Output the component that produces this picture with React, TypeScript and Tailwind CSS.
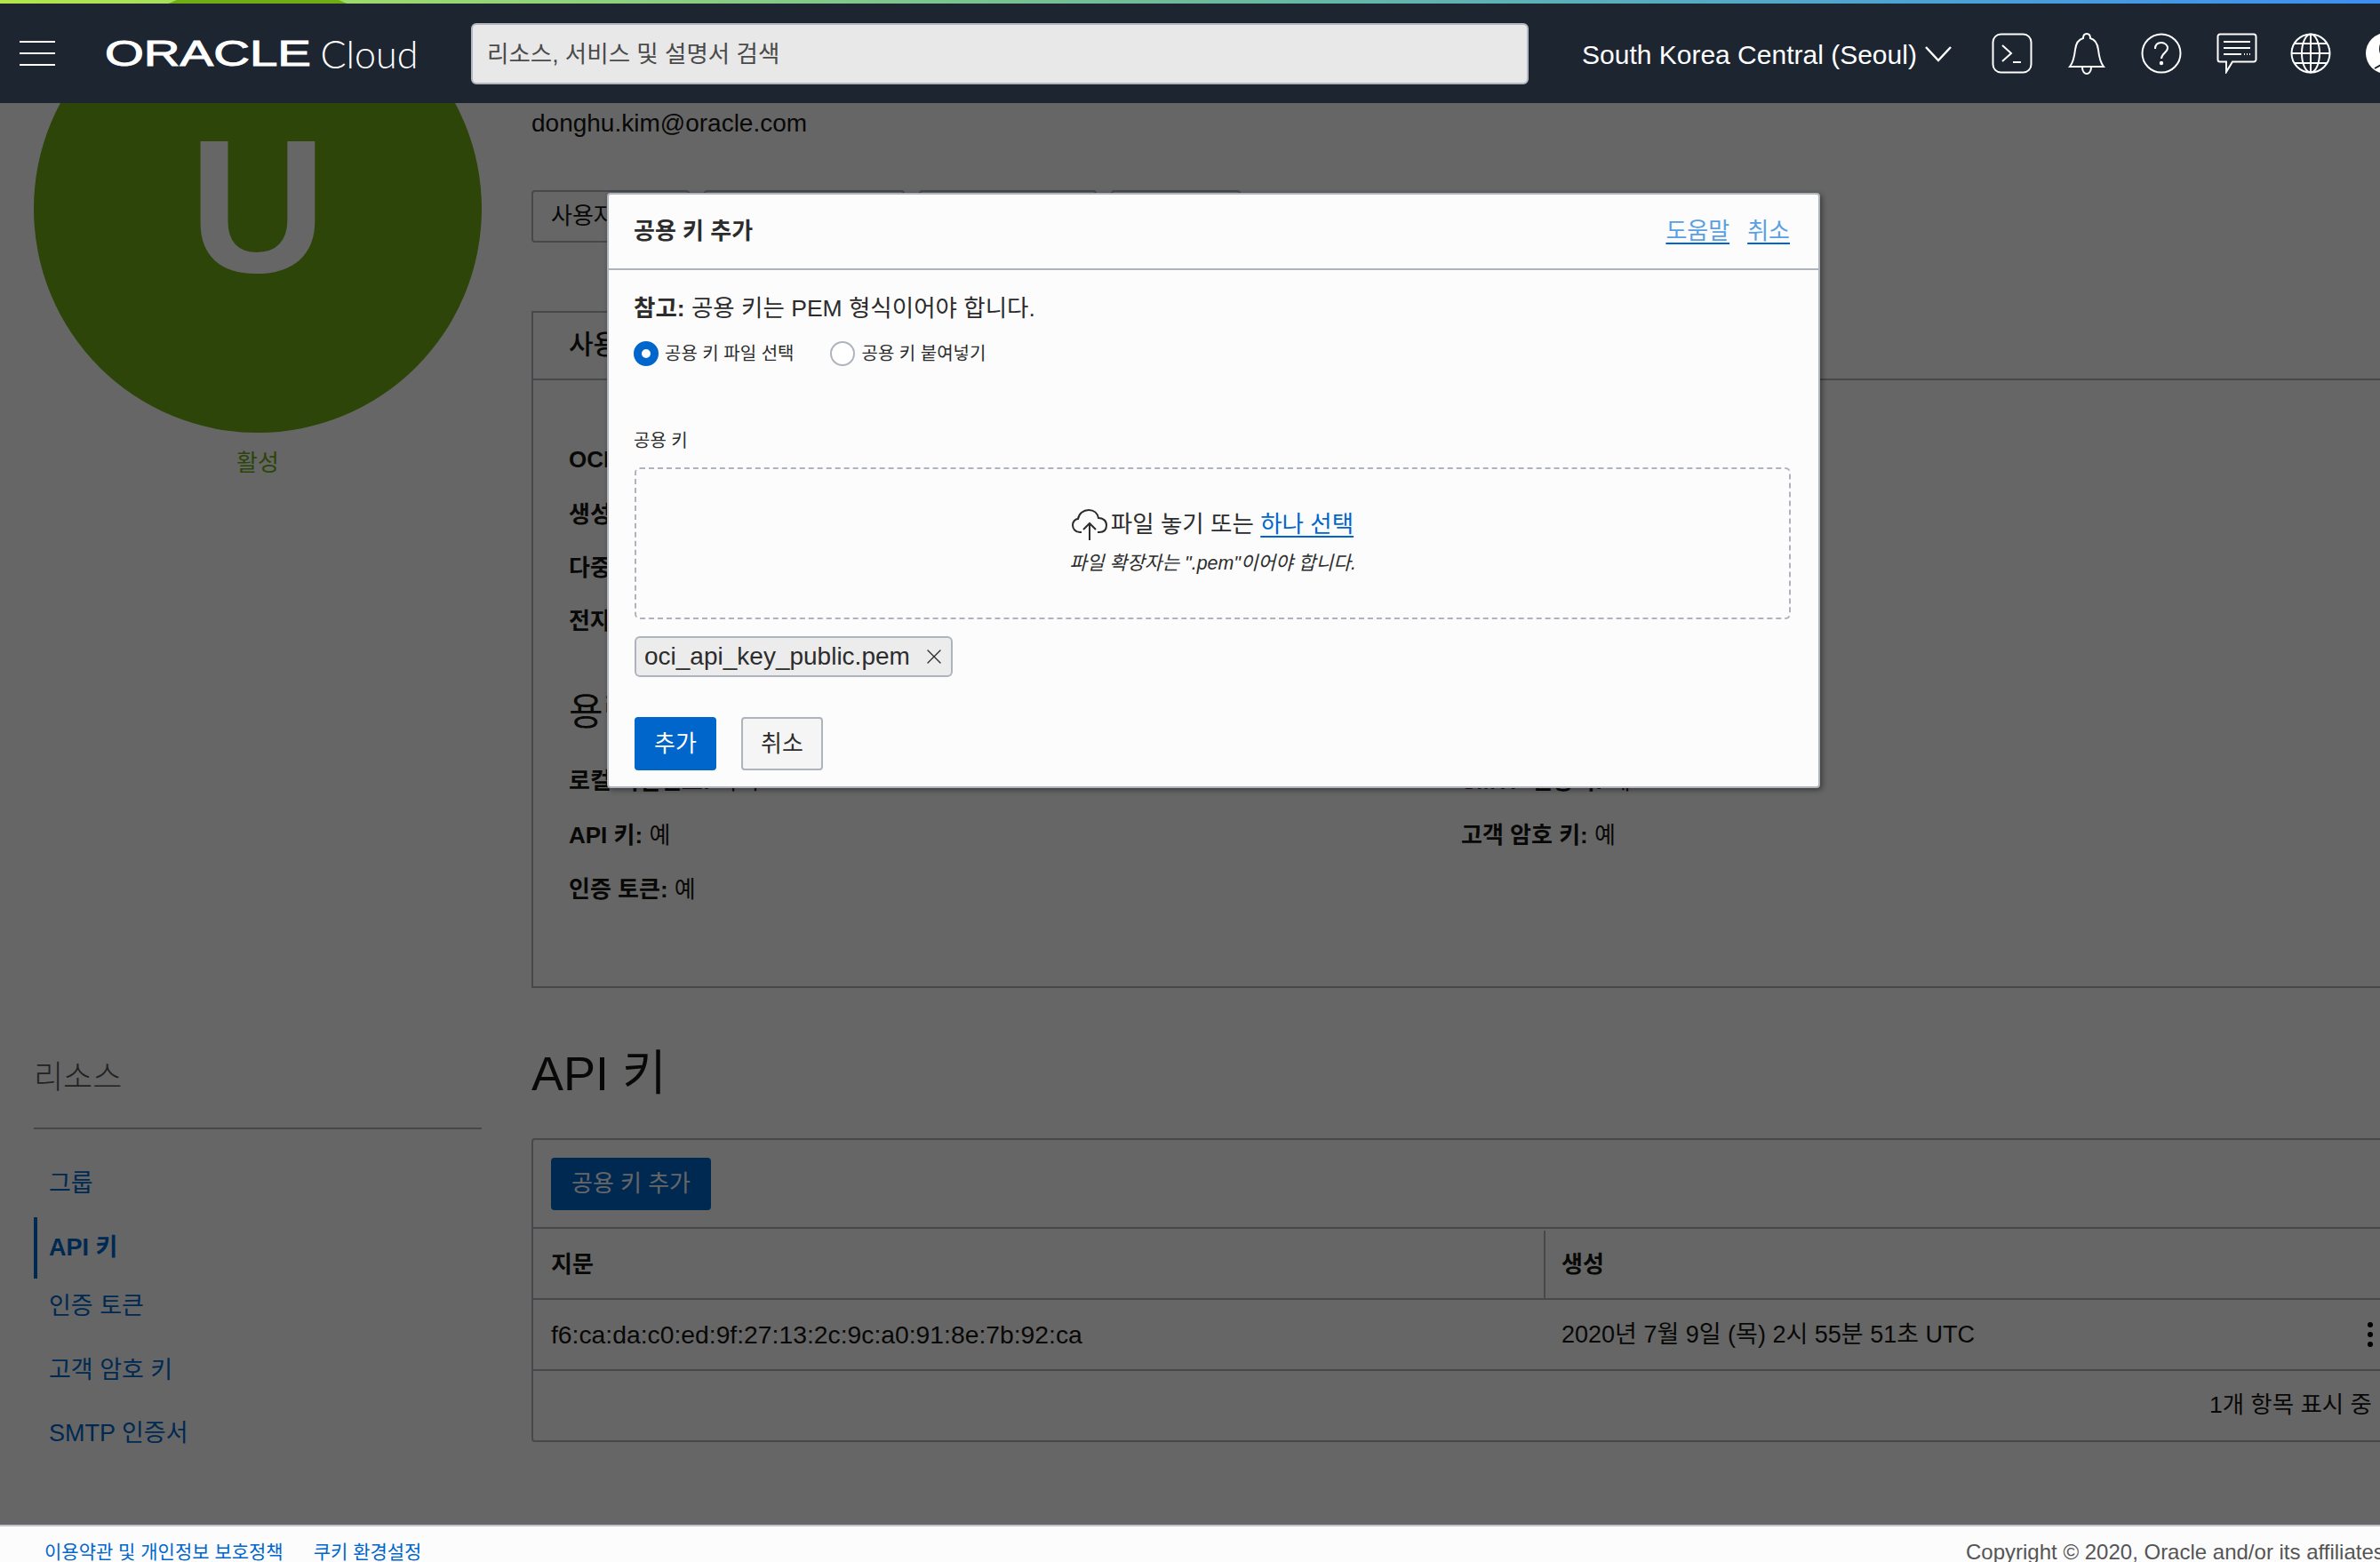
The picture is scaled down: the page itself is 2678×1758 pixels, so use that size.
import { X } from "lucide-react";

const FONT = "font-['Liberation_Sans','Noto_Sans_CJK_KR',sans-serif]";

function HeaderIcons() {
  return (
    <div className="ml-[45px] flex shrink-0 items-center gap-[39px] text-white">
      <svg className="h-[46px] w-[46px] shrink-0" viewBox="0 0 46 46" fill="none" stroke="currentColor" strokeWidth="2">
        <rect x="1.5" y="1.5" width="43" height="43" rx="9" />
        <path d="M12 14l10 9-10 9M24 33h9" />
      </svg>
      <svg className="h-[48px] w-[44px] shrink-0" viewBox="0 0 44 48" fill="none" stroke="currentColor" strokeWidth="2">
        <path d="M3 39c4-5 5-10 6-19 1-8 5-12 9-13 0-3 1-5 4-5s4 2 4 5c4 1 8 5 9 13 1 9 2 14 6 19z" />
        <path d="M17 40c0 5 3 7 5 7s5-2 5-7" />
      </svg>
      <svg className="h-[46px] w-[46px] shrink-0" viewBox="0 0 46 46" fill="none" stroke="currentColor" strokeWidth="2">
        <circle cx="23" cy="23" r="21.5" />
        <path d="M16 18c0-5 3-7 7-7s7 3 7 6c0 5-7 6-7 12" />
        <circle cx="23" cy="34" r="1.2" fill="currentColor" />
      </svg>
      <svg className="h-[46px] w-[46px] shrink-0" viewBox="0 0 46 46" fill="none" stroke="currentColor" strokeWidth="2">
        <path d="M4 1.5h38a2.500 2.500 0 0 1 2.500 2.500v26a2.500 2.500 0 0 1-2.500 2.500H18L11 44V32.500H4A2.500 2.500 0 0 1 1.500 30V4A2.500 2.500 0 0 1 4 1.500z" />
        <path d="M8 10h30M8 17h30M8 24h20M31 24h1M34 24h1M37 24h1" />
      </svg>
      <svg className="-ml-[2px] h-[48px] w-[46px] shrink-0" viewBox="0 0 46 48" fill="none" stroke="currentColor" strokeWidth="2">
        <circle cx="23" cy="24" r="21.500" />
        <ellipse cx="23" cy="24" rx="10" ry="21.500" />
        <path d="M23 2.500v43M5 13h36M1.500 24h43M5 35h36" />
      </svg>
      <svg className="h-[46px] w-[46px] shrink-0" viewBox="0 0 46 46">
        <circle cx="23" cy="23" r="23" fill="currentColor" />
        <ellipse cx="24" cy="18" rx="9" ry="12" fill="#1c2530" />
        <path d="M10 40l14-8 14 8" fill="none" stroke="#1c2530" strokeWidth="2" />
      </svg>
    </div>
  );
}

function Header() {
  return (
    <header className="relative z-20 flex h-[112px] shrink-0 items-center bg-[#1c2530]">
      <div className="ml-[22px] flex w-[40px] shrink-0 flex-col gap-[11px]">
        <div className="h-[2px] bg-white" />
        <div className="h-[2px] bg-white" />
        <div className="h-[2px] bg-white" />
      </div>
      <div className="ml-[56px] flex w-[352px] shrink-0 items-center whitespace-nowrap text-white">
        <span className="origin-left scale-x-[1.41] text-[40px] leading-none [-webkit-text-stroke:1px_white]">ORACLE</span>
        <span className="ml-[78px] font-['Lato',sans-serif] text-[43px] leading-none font-light">Cloud</span>
      </div>
      <div className="ml-[60px] flex h-[69px] w-[1190px] shrink-0 items-center rounded-[6px] border-2 border-[#b3b7c0] bg-[#e8e8e8] pt-[4px] pl-[16px] text-[26.500px] text-[#4a4a4a]">
        리소스, 서비스 및 설명서 검색
      </div>
      <div className="ml-[60px] flex shrink-0 items-center pt-[2px] whitespace-nowrap text-[30px] text-white">
        South Korea Central (Seoul)
        <svg className="ml-[9px] h-[18px] w-[30px]" viewBox="0 0 30 18" fill="none" stroke="currentColor" strokeWidth="2.500">
          <path d="M1 1l14 15L29 1" />
        </svg>
      </div>
      <HeaderIcons />
    </header>
  );
}

function Sidebar() {
  return (
    <aside className="ml-[38px] w-[504px] shrink-0">
      <div className="-mt-[133px] flex h-[504px] w-[504px] items-center justify-center rounded-full bg-[#70ad14] pb-[6px] text-[214px] leading-none font-bold text-white">
        U
      </div>
      <div className="mt-[19px] text-center text-[26px] leading-[30px] text-[#70ad14]">활성</div>
      <div className="mt-[656px] border-b-2 border-[#aeb3bd] pb-[35px] text-[36px] leading-[42px] font-light text-[#555]">
        리소스
      </div>
      <nav className="mt-[39px] text-[27px] text-[#0066cc]">
        <div className="flex h-[44px] items-center pl-[17px]">그룹</div>
        <div className="mt-[16px] flex h-[69px] items-center border-l-4 border-[#0066cc] pl-[13px] font-bold">API 키</div>
        <div className="mt-[1px] flex h-[60px] items-center pl-[17px]">인증 토큰</div>
        <div className="mt-[12px] flex h-[60px] items-center pl-[17px]">고객 암호 키</div>
        <div className="mt-[11px] flex h-[60px] items-center pl-[17px]">SMTP 인증서</div>
      </nav>
    </aside>
  );
}

function DetailsBox() {
  return (
    <section className="mt-[77px] h-[762px] w-[2090px] border-x-2 border-b-2 border-[#aeb3bd]">
      <div className="border-b-2 border-[#aeb3bd]">
        <div className="h-[76px] w-[420px] border-t-2 border-r-2 border-[#aeb3bd] pt-[16px] pl-[40px] text-[30px] leading-[40px] font-medium">
          사용자 정보
        </div>
      </div>
      <div className="pt-[74px] pl-[40px] text-[26px] leading-[30px]">
        <p className="font-bold">OCID:</p>
        <p className="mt-[32px] font-bold">생성 날짜:</p>
        <p className="mt-[30px] font-bold">다중 인증:</p>
        <p className="mt-[30px] font-bold">전자 메일:</p>
        <h3 className="mt-[60px] text-[42px] leading-[56px]">용량</h3>
        <div className="mt-[34px] grid grid-cols-[1004px_1fr] gap-y-[31px]">
          <p><b>로컬 비밀번호:</b> 아니요</p>
          <p><b>SMTP 인증서:</b> 예</p>
          <p><b>API 키:</b> 예</p>
          <p><b>고객 암호 키:</b> 예</p>
          <p><b>인증 토큰:</b> 예</p>
        </div>
      </div>
    </section>
  );
}

function ApiKeys() {
  return (
    <>
      <h2 className="mt-[66px] text-[54px] leading-[60px] text-[#161513]">API 키</h2>
      <section className="mt-[43px] w-[2090px] rounded-[4px] border-2 border-[#aeb3bd] text-[26px]">
        <div className="flex h-[100px] items-center border-b-2 border-[#aeb3bd] pl-[20px]">
          <div className="flex h-[59px] w-[180px] items-center justify-center rounded-[4px] bg-[#0066cc] text-white">
            공용 키 추가
          </div>
        </div>
        <div className="flex h-[80px] items-center border-b-2 border-[#aeb3bd] pt-[2px] font-bold">
          <div className="flex h-full w-[1139px] items-center border-r-2 border-[#aeb3bd] pl-[20px]">지문</div>
          <div className="pl-[18px]">생성</div>
        </div>
        <div className="flex h-[80px] items-center border-b-2 border-[#aeb3bd]">
          <div className="w-[1139px] pl-[20px] text-[28.300px]">f6:ca:da:c0:ed:9f:27:13:2c:9c:a0:91:8e:7b:92:ca</div>
          <div className="flex-1 pl-[18px] text-[27px]">2020년 7월 9일 (목) 2시 55분 51초 UTC</div>
          <div className="mr-[16px] flex flex-col gap-[5px]">
            <span className="h-[6px] w-[6px] rounded-full bg-black" />
            <span className="h-[6px] w-[6px] rounded-full bg-black" />
            <span className="h-[6px] w-[6px] rounded-full bg-black" />
          </div>
        </div>
        <div className="flex h-[78px] items-center justify-end pr-[17px] text-[26.500px]">1개 항목 표시 중</div>
      </section>
    </>
  );
}

function Modal() {
  return (
    <div className="absolute top-[217px] left-[683px] z-30 h-[670px] w-[1365px] rounded-[4px] border-2 border-[#aeb3bd] bg-[#fcfcfc] text-[#2c2c2c] shadow-[2px_2px_6px_rgba(0,0,0,0.45)]">
      <div className="flex h-[85px] items-center justify-between border-b-2 border-[#aeb3bd] pr-[32px] pl-[28px]">
        <span className="text-[26px] font-bold">공용 키 추가</span>
        <div className="flex gap-[20px] text-[26px] text-[#5a9fe3] underline decoration-[#0066cc] decoration-2 underline-offset-4">
          <span>도움말</span>
          <span>취소</span>
        </div>
      </div>
      <div className="pr-[31px] pl-[28px]">
        <p className="mt-[27px] text-[26.500px] leading-[32px]"><b>참고:</b> 공용 키는 PEM 형식이어야 합니다.</p>
        <div className="mt-[21px] flex items-center text-[20px] leading-[28px]">
          <span className="h-[28px] w-[28px] rounded-full border-[9px] border-[#0066cc] bg-white" />
          <span className="ml-[7px]">공용 키 파일 선택</span>
          <span className="ml-[41px] h-[28px] w-[28px] rounded-full border-2 border-[#aeb3bd] bg-white" />
          <span className="ml-[7px]">공용 키 붙여넣기</span>
        </div>
        <div className="mt-[71px] text-[20px] leading-[26px]">공용 키</div>
        <div className="mt-[17px] ml-[1px] flex h-[171px] flex-col items-center rounded-[6px] border-2 border-dashed border-[#aeb3bd] pt-[44px]">
          <div className="flex items-center text-[26.500px] leading-[36px]">
            <svg className="mr-[4px] h-[36px] w-[40px]" viewBox="0 0 40 36" fill="none" stroke="currentColor" strokeWidth="2">
              <path d="M11 27H9C4 27 1 23 1 19c0-4 3-7 6-7 1-6 6-10 12-10 6 0 10 4 11 9 5 0 9 3 9 8s-3 8-8 8h-2" />
              <path d="M20 36V17M13 24l7-7 7 7" />
            </svg>
            파일 놓기 또는&nbsp;<span className="text-[#0066cc] underline underline-offset-4">하나 선택</span>
          </div>
          <div className="mt-[14px] text-[21.400px] leading-[24px] italic">파일 확장자는 ".pem"이어야 합니다.</div>
        </div>
        <div className="mt-[19px] ml-[1px] flex h-[46px] w-[358px] items-center justify-between rounded-[6px] border-2 border-[#aeb3bd] bg-[#ececed] pr-[5px] pl-[9px] text-[28px]">
          oci_api_key_public.pem
          <X className="h-[28px] w-[28px]" strokeWidth={1.2} />
        </div>
        <div className="mt-[45px] ml-[1px] flex gap-[28px] text-[26px]">
          <button className="flex h-[60px] w-[92px] items-center justify-center rounded-[4px] bg-[#0066cc] text-white">추가</button>
          <button className="flex h-[60px] w-[92px] items-center justify-center rounded-[4px] border-2 border-[#aeb3bd] bg-[#f5f5f5]">취소</button>
        </div>
      </div>
    </div>
  );
}

export default function App() {
  return (
    <div className={`${FONT} relative flex h-[1758px] w-[2678px] flex-col overflow-hidden bg-white text-[#161513]`}>
      <div className="h-[4px] shrink-0 bg-gradient-to-r from-[#b2e64a] via-[#6dbb9b] to-[#3d8ff2]" />
      <Header />
      <main className="flex min-h-0 flex-1">
        <Sidebar />
        <div className="ml-[56px] shrink-0">
          <div className="pt-[6px] text-[28px] leading-[34px]">donghu.kim@oracle.com</div>
          <div className="mt-[58px] flex h-[59px] gap-[16px] text-[26px]">
            <div className="flex w-[178px] items-center rounded-[4px] border-2 border-[#aeb3bd] pl-[20px]">사용자 편집</div>
            <div className="flex w-[226px] items-center rounded-[4px] border-2 border-[#aeb3bd] pl-[20px]">비밀번호 재설정</div>
            <div className="flex w-[200px] items-center rounded-[4px] border-2 border-[#aeb3bd] pl-[20px]">기능 편집</div>
            <div className="flex w-[146px] items-center rounded-[4px] border-2 border-[#aeb3bd] pl-[20px]">작업</div>
          </div>
          <DetailsBox />
          <ApiKeys />
        </div>
      </main>
      <footer className="relative z-20 flex h-[42px] shrink-0 border-t-2 border-[#c0c3ca] bg-[#fcfcfc] pt-[16px] pl-[50px] text-[21px] leading-[26px] whitespace-nowrap">
        <div className="flex gap-[34px] text-[#0066cc]">
          <span>이용약관 및 개인정보 보호정책</span>
          <span>쿠키 환경설정</span>
        </div>
        <span className="absolute left-[2212px] text-[24px] text-[#555]">Copyright © 2020, Oracle and/or its affiliates</span>
      </footer>
      <div className="absolute inset-x-0 top-[116px] bottom-[42px] z-10 bg-[rgba(0,0,0,0.6)]" />
      <Modal />
    </div>
  );
}
